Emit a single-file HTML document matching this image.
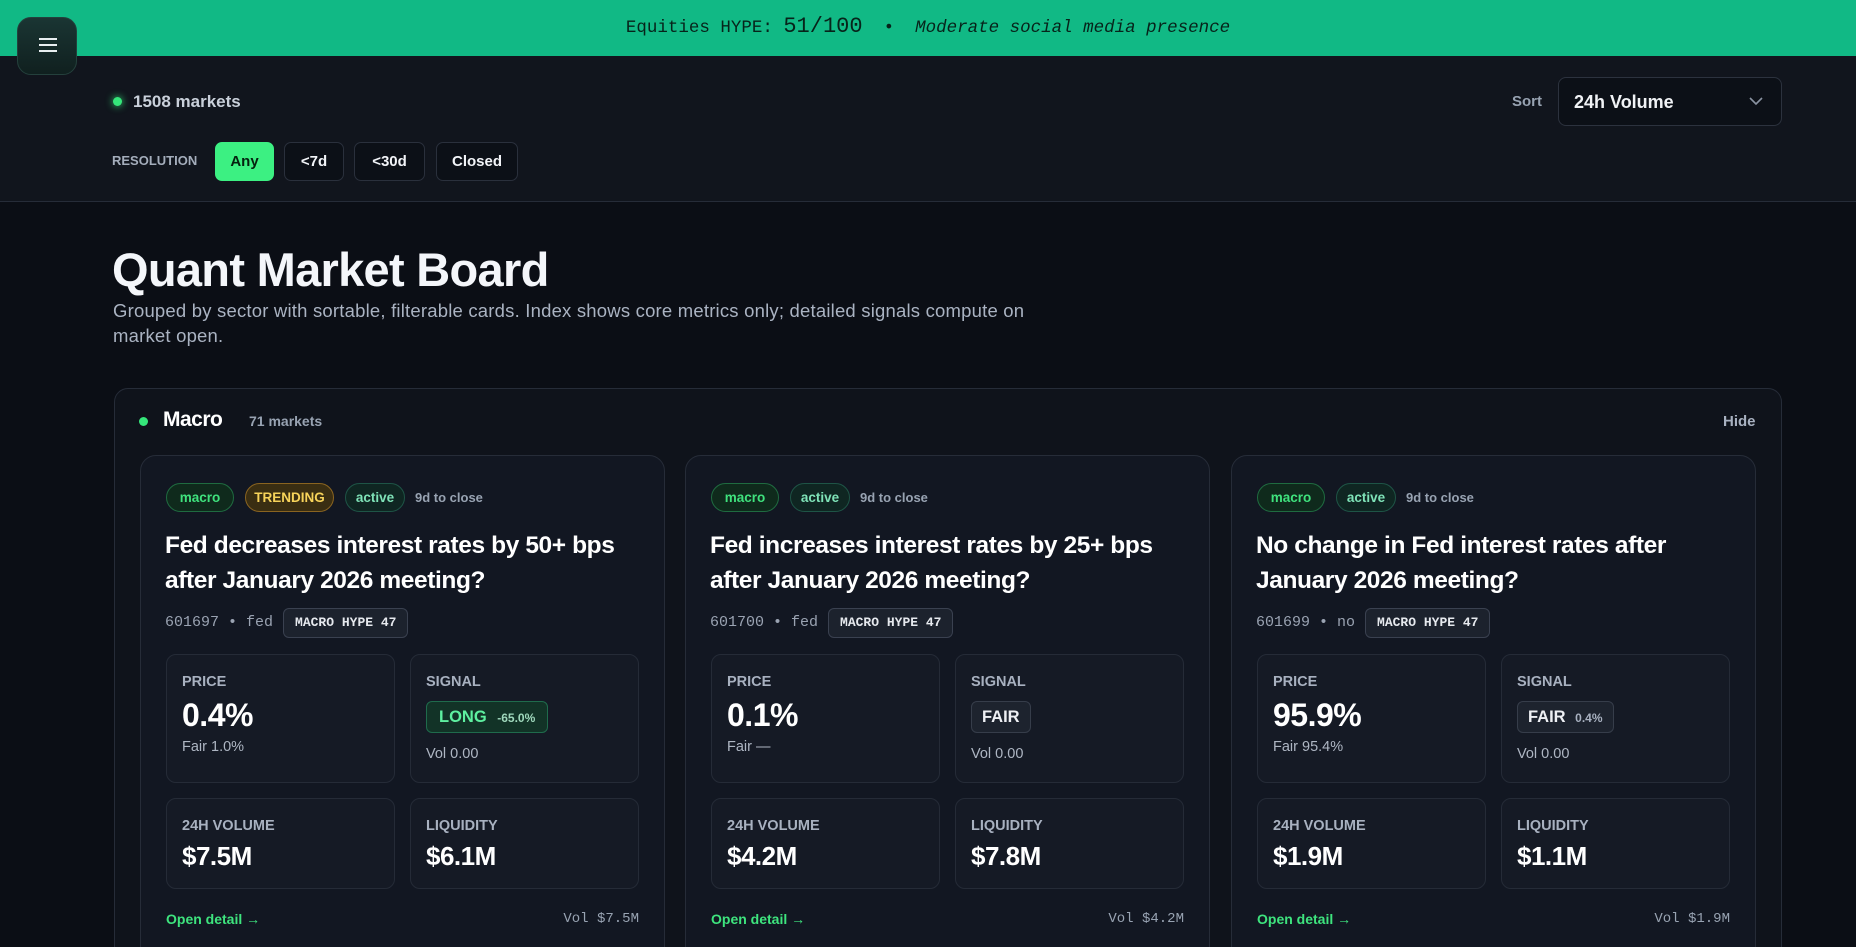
<!DOCTYPE html>
<html><head><meta charset="utf-8"><style>
*{box-sizing:border-box;margin:0;padding:0}
html{width:1856px;height:947px;overflow:hidden}
body{width:1856px;height:947px;overflow:hidden;background:#0b0e15;font-family:"Liberation Sans",sans-serif;color:#e8ecf2;position:relative}
.abs{position:absolute}
.mono{font-family:"Liberation Mono",monospace}
.banner{left:0;top:0;width:1856px;height:56px;background:#11b985;color:#07231a;text-align:center;line-height:54px;font-size:17.5px}
.menu{left:17px;top:17px;width:60px;height:58px;border-radius:14px;background:linear-gradient(#1a3533,#10201f);border:1px solid #24403c}
.top{left:0;top:56px;width:1856px;height:146px;background:#11151d;border-bottom:1px solid #262c38}
.btn{top:142px;height:39px;border:1px solid #2a303c;border-radius:7px;background:#0c1017;color:#f2f4f8;font-weight:bold;font-size:15px;text-align:center;line-height:37px}
.section{left:114px;top:388px;width:1668px;height:580px;border:1px solid #262c38;border-radius:14px;background:#0f131b}
.card{top:455px;width:525px;height:510px;border:1px solid #262c38;border-radius:16px;background:#121722}
.chip{top:27px;height:29px;border-radius:15px;font-size:13.5px;font-weight:bold;line-height:27px;text-align:center}
.ttl{left:24px;top:72px;width:490px;font-size:24.5px;font-weight:bold;line-height:35px;letter-spacing:-0.4px;color:#fff}
.meta{left:24px;top:152px;height:30px;line-height:30px;font-size:15px;color:#9aa3b2}
.badge{display:inline-block;margin-left:10px;height:30px;padding:0 11px;border:1px solid #3a4150;border-radius:6px;background:#1c222d;color:#e6e9ee;font-weight:bold;font-size:13px;line-height:28px;vertical-align:top}
.box{width:229px;border:1px solid #252b37;border-radius:10px;background:#151a25}
.lbl{position:absolute;left:15px;font-size:14.5px;font-weight:bold;color:#a8b1c0}
.val{position:absolute;left:15px;font-weight:bold;color:#fff;letter-spacing:-0.5px}
.sub{position:absolute;left:15px;font-size:14.5px;color:#aeb6c3}
.sig{position:absolute;left:15px;top:46px;height:32px;border-radius:6px;padding:0 12px;line-height:30px;font-size:16.5px;font-weight:bold}
</style></head><body>
<div class="abs banner mono">Equities HYPE: <span style="font-size:22px">51/100</span> &nbsp;• &nbsp;<i>Moderate social media presence</i></div>
<div class="abs top"></div>
<div class="abs menu"><div class="abs" style="left:21px;top:20px;width:18px;height:2px;background:#e8eef0;box-shadow:0 6px 0 #e8eef0,0 12px 0 #e8eef0"></div></div>
<div class="abs" style="left:113px;top:97px;width:9px;height:9px;border-radius:50%;background:#35e67a;box-shadow:0 0 8px #35e67a"></div>
<div class="abs" style="left:133px;top:92px;font-size:17px;font-weight:bold;color:#c9d0da">1508 markets</div>
<div class="abs" style="left:1512px;top:93px;font-size:15px;font-weight:bold;color:#98a3b2">Sort</div>
<div class="abs" style="left:1558px;top:77px;width:224px;height:49px;border:1px solid #2c323e;border-radius:8px;background:#0c1017"><span class="abs" style="left:15px;top:14px;font-size:18px;font-weight:bold;color:#f0f2f5">24h Volume</span><svg class="abs" style="left:190px;top:18px" width="14" height="10" viewBox="0 0 14 10"><path d="M1 2l6 6 6-6" fill="none" stroke="#8a93a2" stroke-width="1.6"/></svg></div>
<div class="abs" style="left:112px;top:153px;font-size:13px;font-weight:bold;color:#a4adbb">RESOLUTION</div>
<div class="abs btn" style="left:215px;width:59px;background:#3cf082;border-color:#3cf082;color:#05210f">Any</div>
<div class="abs btn" style="left:284px;width:60px">&lt;7d</div>
<div class="abs btn" style="left:354px;width:71px">&lt;30d</div>
<div class="abs btn" style="left:436px;width:82px">Closed</div>
<div class="abs" style="left:112px;top:242px;font-size:47px;font-weight:bold;letter-spacing:-0.7px;color:#f4f6fa">Quant Market Board</div>
<div class="abs" style="left:113px;top:298px;width:930px;font-size:18.5px;letter-spacing:0.2px;line-height:25px;color:#aab3c2">Grouped by sector with sortable, filterable cards. Index shows core metrics only; detailed signals compute on market open.</div>
<div class="abs section"></div>
<div class="abs" style="left:139px;top:417px;width:9px;height:9px;border-radius:50%;background:#35e67a"></div>
<div class="abs" style="left:163px;top:408px;font-size:21px;font-weight:bold;letter-spacing:-0.5px;color:#fff">Macro</div>
<div class="abs" style="left:249px;top:413px;font-size:14px;font-weight:bold;color:#98a3b2">71 markets</div>
<div class="abs" style="left:1723px;top:413px;font-size:15px;font-weight:bold;color:#a8b1c0">Hide</div>

<!-- card 1 -->
<div class="abs card" style="left:140px">
<div class="abs chip" style="left:25px;width:68px;background:#0f2a1c;border:1px solid #1f6b40;color:#3fe27d">macro</div>
<div class="abs chip" style="left:104px;width:89px;background:#3a2e12;border:1px solid #8a6420;color:#f7d35a">TRENDING</div>
<div class="abs chip" style="left:204px;width:60px;background:#0f2622;border:1px solid #1e5446;color:#7fe3b8">active</div>
<div class="abs" style="left:274px;top:34px;font-size:13px;font-weight:bold;color:#98a3b2">9d to close</div>
<div class="abs ttl">Fed decreases interest rates by 50+ bps after January 2026 meeting?</div>
<div class="abs meta mono">601697 • fed<span class="badge">MACRO HYPE 47</span></div>
<div class="abs box" style="left:25px;top:198px;height:129px"><div class="lbl" style="top:19px">PRICE</div><div class="val" style="top:42px;font-size:32px">0.4%</div><div class="sub" style="top:84px">Fair 1.0%</div></div>
<div class="abs box" style="left:269px;top:198px;height:129px"><div class="lbl" style="top:19px">SIGNAL</div><div class="sig" style="background:#123327;border:1px solid #1f6b4c;color:#5ef0a0">LONG <span style="font-size:12px;color:#9fd8bc;margin-left:6px">-65.0%</span></div><div class="sub" style="top:91px">Vol 0.00</div></div>
<div class="abs box" style="left:25px;top:342px;height:91px"><div class="lbl" style="top:19px">24H VOLUME</div><div class="val" style="top:42px;font-size:26px">$7.5M</div></div>
<div class="abs box" style="left:269px;top:342px;height:91px"><div class="lbl" style="top:19px">LIQUIDITY</div><div class="val" style="top:42px;font-size:26px">$6.1M</div></div>
<div class="abs" style="left:25px;top:455px;font-size:14px;font-weight:bold;color:#3ee47e">Open detail →</div>
<div class="abs mono" style="right:25px;top:455px;font-size:14px;color:#98a3b2">Vol $7.5M</div>
</div>

<!-- card 2 -->
<div class="abs card" style="left:685px">
<div class="abs chip" style="left:25px;width:68px;background:#0f2a1c;border:1px solid #1f6b40;color:#3fe27d">macro</div>
<div class="abs chip" style="left:104px;width:60px;background:#0f2622;border:1px solid #1e5446;color:#7fe3b8">active</div>
<div class="abs" style="left:174px;top:34px;font-size:13px;font-weight:bold;color:#98a3b2">9d to close</div>
<div class="abs ttl">Fed increases interest rates by 25+ bps after January 2026 meeting?</div>
<div class="abs meta mono">601700 • fed<span class="badge">MACRO HYPE 47</span></div>
<div class="abs box" style="left:25px;top:198px;height:129px"><div class="lbl" style="top:19px">PRICE</div><div class="val" style="top:42px;font-size:32px">0.1%</div><div class="sub" style="top:84px">Fair —</div></div>
<div class="abs box" style="left:269px;top:198px;height:129px"><div class="lbl" style="top:19px">SIGNAL</div><div class="sig" style="background:#1d232e;border:1px solid #363d4a;color:#eef0f4;padding:0 10px">FAIR</div><div class="sub" style="top:91px">Vol 0.00</div></div>
<div class="abs box" style="left:25px;top:342px;height:91px"><div class="lbl" style="top:19px">24H VOLUME</div><div class="val" style="top:42px;font-size:26px">$4.2M</div></div>
<div class="abs box" style="left:269px;top:342px;height:91px"><div class="lbl" style="top:19px">LIQUIDITY</div><div class="val" style="top:42px;font-size:26px">$7.8M</div></div>
<div class="abs" style="left:25px;top:455px;font-size:14px;font-weight:bold;color:#3ee47e">Open detail →</div>
<div class="abs mono" style="right:25px;top:455px;font-size:14px;color:#98a3b2">Vol $4.2M</div>
</div>

<!-- card 3 -->
<div class="abs card" style="left:1231px">
<div class="abs chip" style="left:25px;width:68px;background:#0f2a1c;border:1px solid #1f6b40;color:#3fe27d">macro</div>
<div class="abs chip" style="left:104px;width:60px;background:#0f2622;border:1px solid #1e5446;color:#7fe3b8">active</div>
<div class="abs" style="left:174px;top:34px;font-size:13px;font-weight:bold;color:#98a3b2">9d to close</div>
<div class="abs ttl">No change in Fed interest rates after January 2026 meeting?</div>
<div class="abs meta mono">601699 • no<span class="badge">MACRO HYPE 47</span></div>
<div class="abs box" style="left:25px;top:198px;height:129px"><div class="lbl" style="top:19px">PRICE</div><div class="val" style="top:42px;font-size:32px">95.9%</div><div class="sub" style="top:84px">Fair 95.4%</div></div>
<div class="abs box" style="left:269px;top:198px;height:129px"><div class="lbl" style="top:19px">SIGNAL</div><div class="sig" style="background:#1d232e;border:1px solid #363d4a;color:#eef0f4;padding:0 10px">FAIR <span style="font-size:12px;color:#a8b1c0;margin-left:5px">0.4%</span></div><div class="sub" style="top:91px">Vol 0.00</div></div>
<div class="abs box" style="left:25px;top:342px;height:91px"><div class="lbl" style="top:19px">24H VOLUME</div><div class="val" style="top:42px;font-size:26px">$1.9M</div></div>
<div class="abs box" style="left:269px;top:342px;height:91px"><div class="lbl" style="top:19px">LIQUIDITY</div><div class="val" style="top:42px;font-size:26px">$1.1M</div></div>
<div class="abs" style="left:25px;top:455px;font-size:14px;font-weight:bold;color:#3ee47e">Open detail →</div>
<div class="abs mono" style="right:25px;top:455px;font-size:14px;color:#98a3b2">Vol $1.9M</div>
</div>
</body></html>
